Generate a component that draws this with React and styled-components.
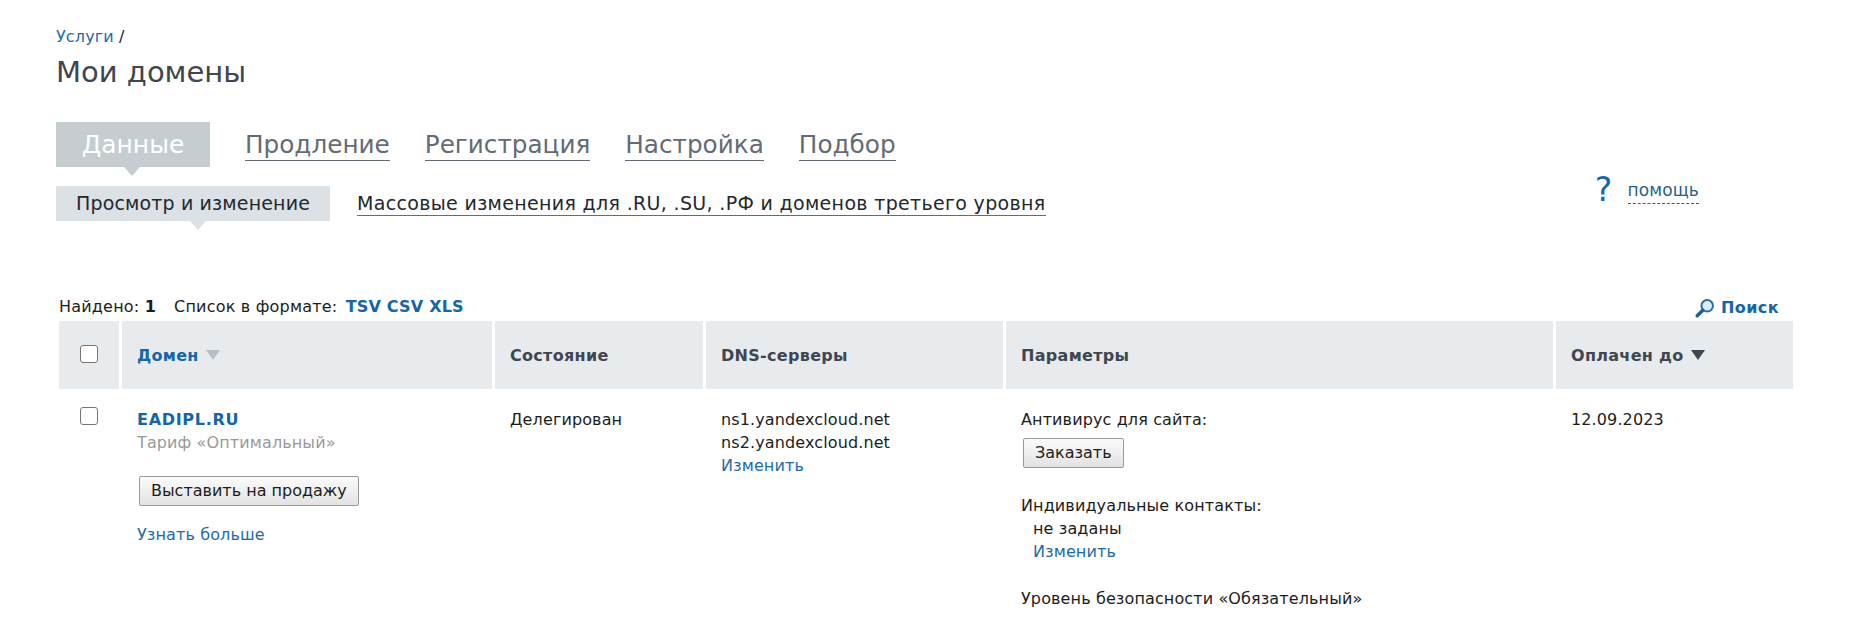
import React from "react";
import styled, { createGlobalStyle } from "styled-components";

const GlobalStyle = createGlobalStyle`
  html, body {
    margin: 0;
    padding: 0;
    background: #fff;
    overflow: hidden;
  }
  body {
    font-family: "DejaVu Sans", Verdana, sans-serif;
    font-size: 16px;
    letter-spacing: 0.12px;
    line-height: 23px;
    color: #1c1c1c;
  }
`;

const Page = styled.div`
  width: 1853px;
  box-sizing: border-box;
  padding: 25px 60px 0 56px;
`;

const Breadcrumb = styled.div`
  height: 23px;
`;

const Link = styled.a`
  color: #1e6aa8;
  text-decoration: none;
`;

const Title = styled.h1`
  margin: 1px 0 0;
  font-size: 29px;
  letter-spacing: 0;
  line-height: 46px;
  font-weight: 400;
  color: #3f4650;
`;

const NavArea = styled.div`
  display: flex;
  justify-content: space-between;
  align-items: flex-start;
  margin-top: 27px;
  height: 173px;
`;

const Tabs = styled.div`
  display: flex;
  align-items: flex-start;
  gap: 35px;
  height: 64px;
`;

const Arrow = styled.span`
  position: absolute;
  top: 100%;
  left: 50%;
  margin-left: ${(props) => props.$shift - 8}px;
  border-left: 8px solid transparent;
  border-right: 8px solid transparent;
  border-top: 9px solid ${(props) => props.color};
`;

const ActiveTab = styled.div`
  position: relative;
  width: 154px;
  height: 45px;
  background: #c5cdd1;
  color: #fff;
  font-size: 25px;
  letter-spacing: 0;
  line-height: 45px;
  text-align: center;
`;

const Tab = styled.a`
  color: #646b73;
  font-size: 24.7px;
  letter-spacing: 0;
  line-height: 30px;
  margin-top: 8px;
  border-bottom: 1px solid #646b73;
`;

const SubTabs = styled.div`
  display: flex;
  align-items: flex-start;
  gap: 27px;
`;

const ActiveSubTab = styled.div`
  position: relative;
  box-sizing: border-box;
  width: 274px;
  height: 35px;
  background: #dce1e5;
  color: #22282e;
  font-size: 19px;
  letter-spacing: 0.15px;
  line-height: 35px;
  text-align: center;
`;

const SubTab = styled.a`
  color: #22282e;
  font-size: 19px;
  letter-spacing: 0.33px;
  line-height: 24px;
  margin-top: 5px;
  border-bottom: 1px solid #646b73;
`;

const Help = styled.div`
  display: flex;
  align-items: center;
  gap: 15px;
  margin: 50px 94px 0 0;
`;

const HelpMark = styled.span`
  color: #1565a8;
  font-size: 33px;
  line-height: 36px;
`;

const HelpLink = styled.a`
  color: #2a5f8a;
  font-size: 17px;
  line-height: 23px;
  margin-top: 2px;
  padding-bottom: 1px;
  border-bottom: 1px dashed #2a5f8a;
`;

const Summary = styled.div`
  display: flex;
  justify-content: space-between;
  height: 26px;
  padding: 0 14px 0 3px;
  line-height: 24px;
`;

const Label = styled.span`
  margin-right: ${(props) => props.$gap || 0}px;
  letter-spacing: 0.2px;
`;

const Strong = styled.b`
  color: ${(props) => props.$color || "inherit"};
  font-weight: 700;
  letter-spacing: 0.2px;
`;

const SearchLink = styled.a`
  display: flex;
  align-items: center;
  gap: 6px;
  color: #1565a8;
  font-weight: 700;
  letter-spacing: 0.4px;
`;

const Grid = styled.div`
  display: grid;
  grid-template-columns: 60px 370px 208px 297px 547px 237px;
  column-gap: 3px;
  margin-left: 3px;
`;

const HeadCell = styled.div`
  display: flex;
  align-items: center;
  gap: 7px;
  height: 68px;
  box-sizing: border-box;
  padding-left: 15px;
  background: #e7ebee;
  color: #3f4650;
  font-weight: 700;
  letter-spacing: 0.3px;
`;

const CheckHead = styled(HeadCell)`
  padding: 0 0 2px 21px;
`;

const SortLabel = styled.span`
  color: #1565a8;
`;

const Check = styled.span`
  display: block;
  box-sizing: border-box;
  width: 18px;
  height: 18px;
  background: #fff;
  border: 1px solid #767676;
  border-radius: 3px;
`;

const Sort = styled.span`
  border-left: 7px solid transparent;
  border-right: 7px solid transparent;
  border-top: 10px solid ${(props) => props.color};
`;

const Cell = styled.div`
  padding: 19px 0 0 15px;
`;

const CheckCell = styled(Cell)`
  padding: 18px 0 0 21px;
`;

const DomainName = styled.a`
  display: block;
  color: #1565a8;
  font-weight: 700;
  letter-spacing: 0.7px;
`;

const Muted = styled.div`
  color: #999;
`;

const Button = styled.button`
  display: block;
  box-sizing: border-box;
  height: 30px;
  padding: 0 11px;
  font: inherit;
  letter-spacing: 0;
  line-height: 26px;
  color: #1c1c1c;
  background: linear-gradient(#fbfbfb, #e2e2e2);
  border: 1px solid #9a9a9a;
  border-radius: 2px;
`;

const SaleButton = styled(Button)`
  margin: 22px 0 17px 2px;
`;

const OrderButton = styled(Button)`
  margin: 7px 0 26px 2px;
`;

const Indented = styled.div`
  padding-left: 12px;
`;

const Param = styled.div`
  margin-top: ${(props) => props.$top || 0}px;
`;

const SearchIcon = () => (
  <svg width="20" height="20" viewBox="0 0 18 18">
    <circle cx="11" cy="7" r="5.2" fill="#dcebf5" stroke="#2a6f9e" strokeWidth="1.8" />
    <path d="M7 11 L2 16" stroke="#1e5f8c" strokeWidth="3" strokeLinecap="round" />
  </svg>
);

const App = () => (
  <Page>
    <GlobalStyle />
    <Breadcrumb>
      <Link>Услуги</Link> /
    </Breadcrumb>
    <Title>Мои домены</Title>
    <NavArea>
      <div>
        <Tabs>
          <ActiveTab>
            Данные
            <Arrow color="#c5cdd1" $shift={-1} />
          </ActiveTab>
          <Tab>Продление</Tab>
          <Tab>Регистрация</Tab>
          <Tab>Настройка</Tab>
          <Tab>Подбор</Tab>
        </Tabs>
        <SubTabs>
          <ActiveSubTab>
            Просмотр и изменение
            <Arrow color="#dce1e5" $shift={5} />
          </ActiveSubTab>
          <SubTab>Массовые изменения для .RU, .SU, .РФ и доменов третьего уровня</SubTab>
        </SubTabs>
      </div>
      <Help>
        <HelpMark>?</HelpMark>
        <HelpLink>помощь</HelpLink>
      </Help>
    </NavArea>
    <Summary>
      <div>
        <Label $gap={18}>
          Найдено: <Strong>1</Strong>
        </Label>
        <Label $gap={3}>Список в формате: </Label>
        <Strong $color="#1565a8">TSV CSV XLS</Strong>
      </div>
      <SearchLink>
        <SearchIcon />
        Поиск
      </SearchLink>
    </Summary>
    <Grid>
      <CheckHead>
        <Check />
      </CheckHead>
      <HeadCell>
        <SortLabel>Домен</SortLabel>
        <Sort color="#b4c0c8" />
      </HeadCell>
      <HeadCell>Состояние</HeadCell>
      <HeadCell>DNS-серверы</HeadCell>
      <HeadCell>Параметры</HeadCell>
      <HeadCell>
        Оплачен до
        <Sort color="#3f4650" />
      </HeadCell>

      <CheckCell>
        <Check />
      </CheckCell>
      <Cell>
        <DomainName>EADIPL.RU</DomainName>
        <Muted>Тариф «Оптимальный»</Muted>
        <SaleButton>Выставить на продажу</SaleButton>
        <Link>Узнать больше</Link>
      </Cell>
      <Cell>Делегирован</Cell>
      <Cell>
        <div>ns1.yandexcloud.net</div>
        <div>ns2.yandexcloud.net</div>
        <Link>Изменить</Link>
      </Cell>
      <Cell>
        <div>Антивирус для сайта:</div>
        <OrderButton>Заказать</OrderButton>
        <div>Индивидуальные контакты:</div>
        <Indented>
          <div>не заданы</div>
          <Link>Изменить</Link>
        </Indented>
        <Param $top={24}>Уровень безопасности «Обязательный»</Param>
      </Cell>
      <Cell>12.09.2023</Cell>
    </Grid>
  </Page>
);

export default App;
